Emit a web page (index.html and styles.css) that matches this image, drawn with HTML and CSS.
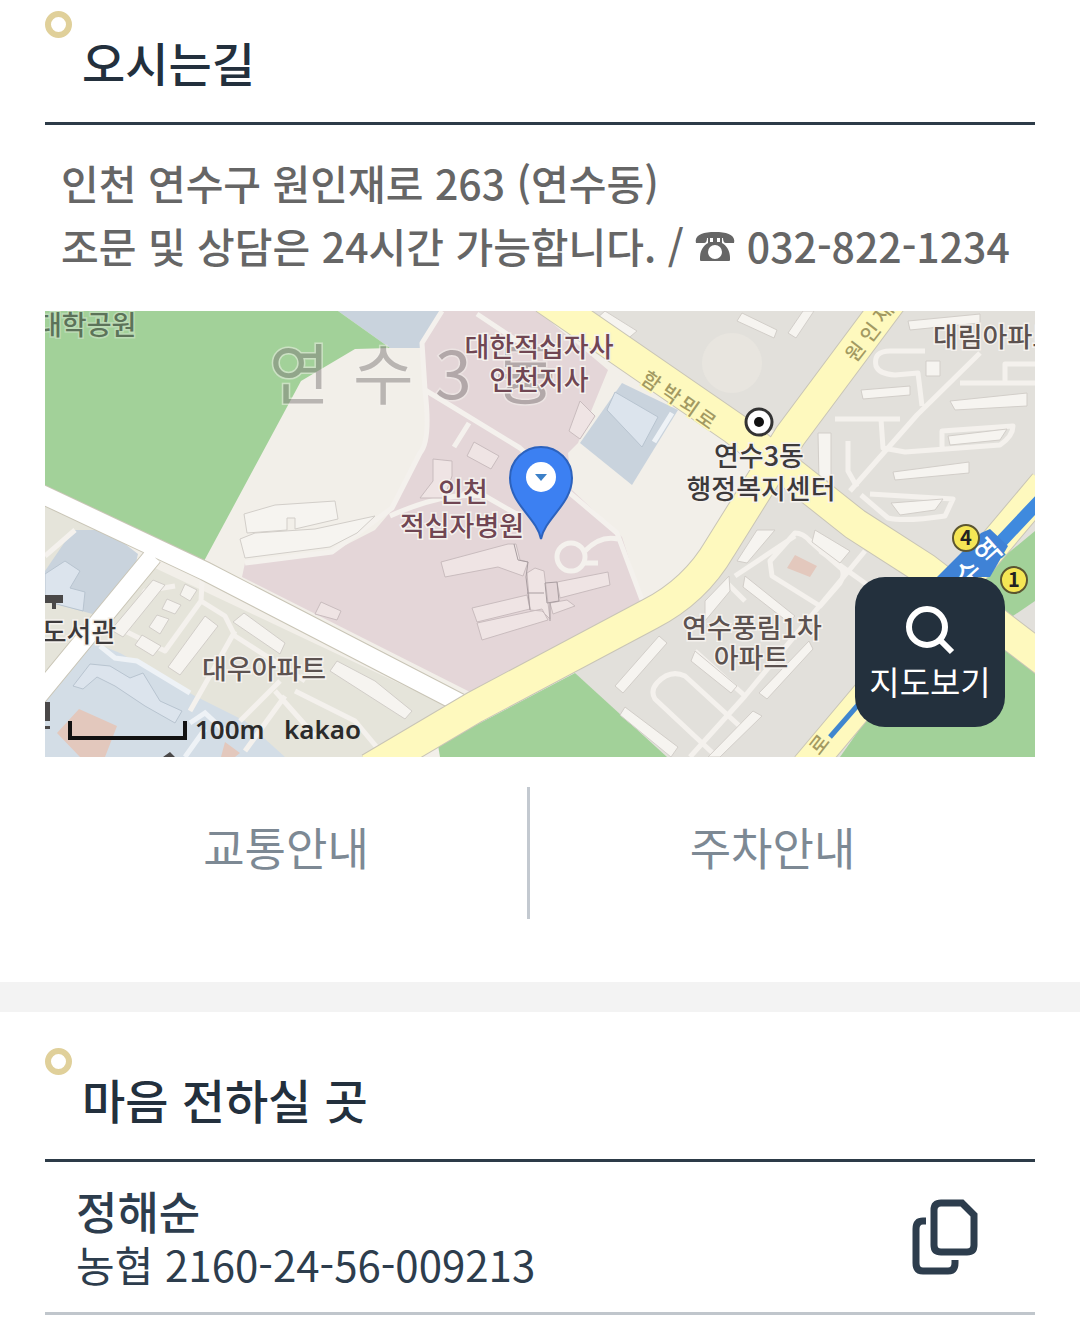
FILE: index.html
```html
<!DOCTYPE html>
<html lang="ko">

<head>
    <meta charset="UTF-8">
    <meta name="viewport" content="width=device-width, initial-scale=1.0">
    <title>오시는길</title>
    <link rel="stylesheet" href="styles.css">
</head>

<body>
    <section class="section location">
        <header class="section-title">
            <span class="dot"></span>
            <h2>오시는길</h2>
        </header>
        <p class="address">
            인천 연수구 원인재로 263 (연수동)<br>
            조문 및 상담은 24시간 가능합니다. / <svg class="phone" viewBox="0 0 40 32" role="img" aria-label="전화"><path fill-rule="evenodd" d="M1 12C-1 4 8 1 20 1s21 3 19 11h-8c-2 0-3-2-3-5h-1v5c5 3 8 8 8 15v2q0 1-1 1H6q-1 0-1-1v-2c0-7 3-12 8-15V7h-1c0 3-1 5-3 5zM15 7v4h3V7zm7 0v4h3V7zm-2 7a7 7 0 1 0 0 14 7 7 0 0 0 0-14z"/></svg> 032-822-1234
        </p>

        <div class="map">
            <svg class="map-image" viewBox="0 0 990 446" role="img" aria-label="약도">
                <rect class="land" width="990" height="446"/>
                <!-- blocks -->
                <path class="block" d="M530 0H990V446H600L530 362L640 290L700 190L745 125L700 110Z"/>
                <path class="block-warm" d="M0 193L60 219L93 249L400 394L330 446H0Z"/>
                <path class="land" d="M563 60L710 135L670 220L597 289L577 226L527 179Z"/>
                <path class="blue" d="M293 0H397L382 37H345Z"/>
                <path class="green" d="M0 0H293L345 37L310 38L256 70L158 252L0 178Z"/>
                <path class="green" d="M530 362L622 446H395L393 434Z"/>
                <path class="green" d="M990 220V446H795L905 290Z"/>
                <path class="block" d="M990 290L962 309L990 334Z"/>
                <path class="pink" d="M397 0H493L563 59L533 132L523 142L527 179L577 226L597 289L427 382L197 266L200 252L287 241L330 219L347 199L382 132L380 79L377 32Z"/>
                <path class="blue" d="M577 72L633 99L587 174L535 132Z"/>
                <path class="blue" d="M28 219H62L93 243L91 251L55 305L0 290V260Z"/>
                <path class="blue-light" d="M0 384L48 331L75 342L150 385L200 410L240 446H0Z"/>

                <!-- lanes and paths -->
                <g class="lane">
                    <path d="M397 0L377 32L380 79Q386 130 375 142L347 197L287 241L200 252"/>
                    <path d="M380 79L475 137L520 178L572 222L597 289M424 112L409 136M432 3L480 35M345 205Q400 180 440 185L475 205"/>
                    <path d="M540 240Q555 224 573 228M540 252H553"/>
                    <circle cx="526" cy="246" r="14"/>
                    <path d="M935 42L872 104L805 180M880 40H845Q828 40 831 55Q834 63 850 64L873 62L877 95M790 108H855M836 108L838 137L860 141L955 134Q968 125 968 115L897 120V138M803 130V160L812 176M915 72H990M960 70V53H990M816 184L843 207Q860 211 900 205L908 188L825 183"/>
                    <path d="M158 255L156 290L120 340L80 320L100 280L130 275M156 290L180 305L190 325L260 370M190 320L145 400M235 370L195 410M250 380L310 410L340 446M230 380L270 425M200 440L240 385"/>
                    <path d="M672 446L610 388Q605 380 612 372Q625 358 640 365L700 420M820 240L700 385L645 446M725 250L750 222Q758 222 765 230L797 258Q800 265 795 272L775 295L727 265ZM680 270L700 290M650 340L700 385M775 240L845 290M690 265L750 225"/>
                    <path d="M30 219L0 245M10 272L30 290"/>
                </g>

                <!-- buildings -->
                <g class="building">
                    <path d="M199 203L230 194L290 190L293 208L250 218V207H242V219L202 222Z"/>
                    <path d="M195 228L210 222L270 218L330 205L312 222L285 236L200 247Z"/>
                    <path d="M108 269L120 274L78 326L66 319ZM140 273L152 279L145 290L135 284ZM160 305L173 315L135 364L123 356ZM112 304L124 308L115 323L104 316ZM122 288L136 294L130 303L117 298ZM97 324L116 335L108 345L90 334ZM199 302L240 332L235 343L188 311ZM292 350L330 370L367 400L360 408L285 360Z"/>
                    <path d="M614 325L622 332L578 382L570 375ZM580 396L633 436L626 446L575 404Z"/>
                    <path d="M697 2L732 19L729 27L692 10ZM758 0H769L751 27L743 22ZM863 10L935 3V12L865 19ZM881 50H895V65H881ZM816 79L865 75V84L818 88ZM905 90L982 82V95L910 99ZM848 161L924 151V162L850 169ZM773 122H786V170H774ZM846 192L898 188L890 199L855 204ZM903 125L962 118L955 129L905 134Z"/>
                    <path d="M712 219H730L702 252L692 250ZM770 219L805 240L795 252L767 231ZM684 265L660 290V310L685 280ZM700 265L750 305L743 311L698 276ZM764 330L768 338L722 388L714 382ZM708 400L717 405L675 446H663ZM650 340L692 375L686 382L646 350Z"/>
                    <path d="M543 15L560 0L592 20L580 30Z"/>
                </g>
                <g class="building-pink">
                    <path d="M396 251L463 233L471 233L475 249L483 251L478 265L453 256L400 266ZM482 262L490 257L499 260L505 308L497 300L485 299ZM427 297L482 284L485 298L432 311ZM432 312L497 298L503 309L437 329ZM512 271L563 261L565 274L515 287ZM505 292L522 289L530 295L508 303Z"/>
                    <path d="M535 90L550 105L535 128L524 120ZM388 148L407 150V165L399 187H375L388 170ZM429 131L454 145L446 158L422 145ZM276 291L296 300L292 309L270 303Z"/>
                </g>
                <path class="building-line" d="M469 233L473 249L483 251L481 266L485 299M500 272L512 271L514 290L502 292ZM482 282H499M505 292V310"/>
                <path class="building-blue" d="M570 81L613 106L597 136L562 99ZM0 263L20 250L35 260L25 277L40 281L38 300L0 290ZM28 375L45 353L65 355L85 367L98 362L115 390L137 400L130 412L100 395L70 375L52 366L38 378Z"/>
                <path class="path-blue" d="M627 102L609 131M55 335L70 347L92 350L145 382M160 418L140 446M145 412L160 402L185 425"/>
                <path class="orange" d="M34 398L72 415L60 446H35L12 422ZM180 431L195 442L190 446H176ZM750 244L772 255L765 266L742 257Z"/>
                <circle class="land-soft" cx="687" cy="52" r="30"/>

                <!-- roads -->
                <path class="road-edge white-road" d="M-10 180L160 260L330 348L415 392M108 245L-8 386"/>
                <path class="white-road" d="M-10 180L160 260L330 348L415 392M108 245L-8 386"/>
                <path class="road-edge yellow-road" d="M500 -13L690 118L810 213L880 258L1000 350M850 -16L745 125L675 237Q650 280 605 303L430 396L325 458M1000 173L762 456"/>
                <path class="yellow-road" d="M500 -13L690 118L810 213L880 258L1000 350M850 -16L745 125L675 237Q650 280 605 303L430 396L325 458M1000 173L762 456"/>
                <path class="subway" d="M1000 184L950 237L895 300"/>
                <path class="subway-thin" d="M895 300L785 426"/>
                <path class="subway-station" d="M936 222L945 218L963 235L945 266H892Z"/>

                <!-- labels -->
                <g class="label district">
                    <text x="224" y="88">연</text>
                    <text x="308" y="88">수</text>
                    <text x="390" y="88">3</text>
                    <text x="450" y="88">동</text>
                </g>
                <g class="label green-label">
                    <text x="-8" y="24">대학공원</text>
                </g>
                <g class="label pink-label">
                    <text x="494" y="46">대한적십자사</text>
                    <text x="494" y="79">인천지사</text>
                    <text x="418" y="191">인천</text>
                    <text x="417" y="225">적십자병원</text>
                </g>
                <g class="label dark-label">
                    <text x="714" y="155">연수3동</text>
                    <text x="716" y="188">행정복지센터</text>
                    <text x="34" y="331">도서관</text>
                </g>
                <g class="label gray-label">
                    <text x="950" y="36">대림아파트</text>
                    <text x="219" y="368">대우아파트</text>
                    <text x="707" y="327">연수풍림1차</text>
                    <text x="706" y="357">아파트</text>
                </g>
                <g class="label road-label">
                    <text transform="translate(602 76) rotate(35)">함</text>
                    <text transform="translate(622 89) rotate(35)">박</text>
                    <text transform="translate(640 101) rotate(35)">뫼</text>
                    <text transform="translate(657 114) rotate(35)">로</text>
                    <text transform="translate(816 45) rotate(-52)">원</text>
                    <text transform="translate(831 26) rotate(-52)">인</text>
                    <text transform="translate(844 6) rotate(-52)">재</text>
                    <text transform="translate(780 438) rotate(-52)">로</text>
                </g>
                <g class="label station-label">
                    <text transform="translate(930 270) rotate(-42)">수</text>
                    <text transform="translate(950 248) rotate(-42)">역</text>
                </g>
                <path class="edge-mark" d="M0 284H18V292H11V298H7V292H0ZM0 391H5V410H0ZM0 415H5V418H0ZM118 446L125 441L130 446Z"/>

                <!-- markers -->
                <g class="office">
                    <circle cx="714" cy="111" r="13"/>
                    <circle class="office-dot" cx="714" cy="111" r="5"/>
                </g>
                <g class="exit">
                    <circle cx="921" cy="227" r="13"/>
                    <text x="921" y="234">4</text>
                    <circle cx="969" cy="269" r="13"/>
                    <text x="969" y="276">1</text>
                </g>
                <path class="pin" d="M496 228C492 207 465 193 465 167A31 31 0 0 1 527 167C527 193 500 207 496 228Z"/>
                <circle class="pin-hole" cx="496" cy="166" r="15"/>
                <path class="pin-arrow" d="M490 163H502L496 170Z"/>

                <!-- scale -->
                <path class="scale" d="M25 410V427H140V410"/>
                <text class="scale-text" x="150" y="428">100m</text>
                <text class="scale-text" x="239" y="428">kakao</text>
            </svg>
            <button type="button" class="map-button">
                <svg viewBox="0 0 50 50" aria-hidden="true"><circle cx="22" cy="22" r="18"/><path d="M35 35L47 47"/></svg>
                지도보기
            </button>
        </div>

        <nav class="guide">
            <a href="#traffic">교통안내</a>
            <a href="#parking">주차안내</a>
        </nav>
    </section>

    <section class="section account">
        <header class="section-title">
            <span class="dot"></span>
            <h2>마음 전하실 곳</h2>
        </header>
        <div class="account-row">
            <div>
                <strong class="account-name">정해순</strong>
                <p class="account-number">농협 2160-24-56-009213</p>
            </div>
            <button type="button" class="copy-button" aria-label="계좌번호 복사">
                <svg viewBox="0 0 66 76" aria-hidden="true"><path d="M29 4H50L62 16V46Q62 53 55 53H29Q22 53 22 46V11Q22 4 29 4Z"/><path d="M14 22H11Q4 22 4 30V64Q4 72 11 72H36Q43 72 43 64V61"/></svg>
            </button>
        </div>
    </section>
</body>

</html>
```
FILE: styles.css
```css
* {
    box-sizing: border-box;
}

body {
    margin: 0;
    background-color: #fff;
    color: #23303d;
    font-family: "Noto Sans CJK KR", sans-serif;
}

h2,
p {
    margin: 0;
}

button {
    border: none;
    cursor: pointer;
    font-family: inherit;
}

.section {
    padding: 36px 45px 0;
}

.location {
    padding-top: 11px;
    padding-bottom: 63px;
    border-bottom: 30px solid #f3f3f3;
}

.section-title {
    display: flex;
    align-items: flex-start;
    gap: 10px;
    border-bottom: 3px solid #2d3b48;
}

.dot {
    width: 27px;
    height: 27px;
    border: 6px solid #e0d09a;
    border-radius: 50%;
}

.section-title h2 {
    padding: 16px 0 25px;
    font-size: 47px;
    font-weight: 500;
    line-height: 70px;
}

.address {
    padding: 26px 0 34px 16px;
    color: #666;
    font-size: 41px;
    font-weight: 500;
    line-height: 63px;
}

.phone {
    width: 40px;
    height: 32px;
    fill: #666;
}

/* map */
.map {
    position: relative;
}

.map-image {
    display: block;
    width: 100%;
    overflow: hidden;
}

.land { fill: #f2efe9; }
.land-soft { fill: #e8e5df; }
.block { fill: #e2e0db; }
.block-warm { fill: #e5e4da; }
.green { fill: #a2d199; }
.pink { fill: #e4d6d8; }
.blue { fill: #c9d3dd; }
.blue-light { fill: #d3dde6; }
.orange { fill: #e3c8bd; }

.lane {
    fill: none;
    stroke: #f4f1ed;
    stroke-width: 5;
    stroke-linejoin: round;
}

.building {
    fill: #f6f4f0;
    stroke: #d2cec9;
}

.building-pink {
    fill: #efe4e4;
    stroke: #c9bcbe;
}

.building-line {
    fill: none;
    stroke: #a89da0;
}

.building-blue {
    fill: #dce4ed;
    stroke: #b8c4d0;
}

.path-blue {
    fill: none;
    stroke: #eef2f6;
    stroke-width: 5;
}

.white-road {
    fill: none;
    stroke: #fff;
    stroke-width: 18;
}

.yellow-road {
    fill: none;
    stroke: #fef9be;
    stroke-width: 31;
}

.road-edge {
    stroke: #c9c5b6;
}

.road-edge.white-road {
    stroke-width: 20;
}

.road-edge.yellow-road {
    stroke-width: 33;
}

.subway {
    fill: none;
    stroke: #3f8ade;
    stroke-width: 13;
}

.subway-thin {
    fill: none;
    stroke: #3f86cf;
    stroke-width: 5;
}

.subway-station {
    fill: #3f82d6;
}

.label {
    font-size: 27px;
    font-weight: 500;
    text-anchor: middle;
    stroke: #f5f2ee;
    stroke-width: 3;
    paint-order: stroke;
}

.district {
    fill: #827c7c;
    font-size: 66px;
    font-weight: 400;
    opacity: 0.5;
    text-anchor: start;
}

.green-label {
    fill: #5c7359;
    stroke: #bcdcb5;
    text-anchor: start;
}

.pink-label { fill: #704653; }
.dark-label { fill: #3d3a3b; }
.gray-label { fill: #5c5250; }

.road-label {
    fill: #a39a62;
    font-size: 20px;
    stroke: #fef9be;
}

.station-label {
    fill: #fff;
    font-size: 27px;
    stroke: #3f82d6;
}

.edge-mark {
    fill: #4a4848;
}

.office circle {
    fill: #fff;
    stroke: #333;
    stroke-width: 3;
}

.office .office-dot {
    fill: #111;
    stroke: none;
}

.exit circle {
    fill: #f5e655;
    stroke: #5b5530;
    stroke-width: 2;
}

.exit text {
    fill: #222;
    font-size: 20px;
    font-weight: 700;
    text-anchor: middle;
}

.pin {
    fill: #3c80f2;
    stroke: #2c62bd;
    stroke-width: 2;
}

.pin-hole { fill: #fff; }
.pin-arrow { fill: #3c80c8; }

.scale {
    fill: none;
    stroke: #111;
    stroke-width: 4;
}

.scale-text {
    fill: #2b2b2b;
    font-family: "Noto Sans", sans-serif;
    font-size: 26px;
    font-weight: 600;
}

.map-button {
    position: absolute;
    right: 30px;
    bottom: 30px;
    display: flex;
    flex-direction: column;
    align-items: center;
    gap: 2px;
    width: 150px;
    height: 150px;
    padding: 28px 0 0;
    border-radius: 30px;
    background-color: #23303d;
    color: #fff;
    font-size: 33px;
    line-height: 48px;
}

.map-button svg {
    width: 50px;
    height: 50px;
    fill: none;
    stroke: #fff;
    stroke-width: 6;
}

.map-button circle,
.map-button path {
    vector-effect: non-scaling-stroke;
}

/* guide tabs */
.guide {
    display: grid;
    grid-template-columns: 1fr 1fr;
    padding: 30px 20px 0 0;
}

.guide a {
    padding: 26px 0 38px;
    color: #7d8994;
    font-size: 45px;
    line-height: 68px;
    text-align: center;
    text-decoration: none;
}

.guide a:first-child {
    border-right: 3px solid #c3c9d0;
}

/* account */
.account-row {
    display: flex;
    align-items: center;
    justify-content: space-between;
    padding: 22px 57px 22px 31px;
    border-bottom: 3px solid #c0c6cc;
    color: #2d3d4d;
    line-height: 53px;
}

.account-name {
    display: block;
    font-size: 45px;
    font-weight: 500;
}

.account-number {
    font-size: 42px;
}

.copy-button {
    padding: 0;
    background: none;
}

.copy-button svg {
    display: block;
    width: 66px;
    height: 76px;
    fill: none;
    stroke: #2d3d4d;
    stroke-width: 7;
}
```
